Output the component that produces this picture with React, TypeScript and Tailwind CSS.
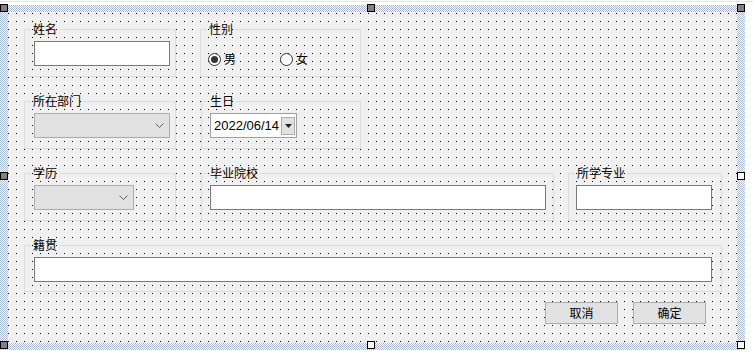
import type { ReactNode } from 'react'

function GroupBox({
  title,
  className,
  children,
}: {
  title: string
  className: string
  children?: ReactNode
}) {
  return (
    <fieldset className={`border border-[#dcdcdc] ${className}`}>
      <legend className="ml-[6px] px-[2px] text-[12px] leading-[16px] text-black">
        {title}
      </legend>
      {children}
    </fieldset>
  )
}

function TextBox({ className }: { className: string }) {
  return <div className={`h-[25px] border border-[#7a7a7a] bg-white ${className}`} />
}

function ComboBox({ className }: { className: string }) {
  return (
    <div
      className={`flex h-[25px] items-center justify-end border border-[#adadad] bg-[#e1e1e1] pr-[5px] ${className}`}
    >
      <svg width="9" height="5" viewBox="0 0 9 5" fill="none">
        <polyline points="0.5,0.5 4.5,4.5 8.5,0.5" stroke="#606060" strokeWidth="1" />
      </svg>
    </div>
  )
}

function Radio({ label, checked }: { label: string; checked?: boolean }) {
  return (
    <div className="flex items-center gap-[3px]">
      <span className="flex h-[13px] w-[13px] items-center justify-center rounded-full border border-[#333] bg-white">
        {checked && <span className="h-[7px] w-[7px] rounded-full bg-[#333]" />}
      </span>
      <span className="text-[12px] leading-[16px]">{label}</span>
    </div>
  )
}

function Button({ label }: { label: string }) {
  return (
    <div className="flex h-[22px] w-[73px] items-center justify-center border border-[#adadad] bg-[#e1e1e1] text-[12px]">
      {label}
    </div>
  )
}

function Handle({ className, white }: { className: string; white?: boolean }) {
  return (
    <div
      className={`absolute h-[8px] w-[8px] border border-black ${white ? 'bg-white' : 'bg-[#808080]'} ${className}`}
    />
  )
}

export default function App() {
  return (
    <div className="relative h-[355px] w-[753px] overflow-hidden bg-white font-['Noto_Sans_CJK_SC',sans-serif] text-black">
      <div className="mt-[1px] h-px w-full bg-[#e3e3e3]" />
      {/* selection frame */}
      <div className="mt-[3px] h-[345px] w-[745px] bg-[repeating-conic-gradient(#a9bbd2_0_25%,#ffffff_0_50%)] bg-[length:2px_2px] pb-[7px] pl-[8px] pr-[8px] pt-[7px]">
        {/* form surface with designer grid */}
        <div className="flex h-full w-full flex-col bg-black bg-[linear-gradient(to_right,transparent_1px,#f0f0f0_1px),linear-gradient(to_bottom,transparent_1px,#f0f0f0_1px)] bg-[length:8px_8px] bg-[position:0_1px] pl-[16px] pt-[9px]">
          <div className="flex gap-[24px]">
            <GroupBox title="姓名" className="h-[56px] w-[152px]">
              <TextBox className="ml-[9px] mt-[4px] w-[136px]" />
            </GroupBox>
            <GroupBox title="性别" className="h-[56px] w-[161px]">
              <div className="ml-[7px] mt-[14px] flex gap-[44px]">
                <Radio label="男" checked />
                <Radio label="女" />
              </div>
            </GroupBox>
          </div>

          <div className="mt-[16px] flex gap-[25px]">
            <GroupBox title="所在部门" className="h-[56px] w-[152px]">
              <ComboBox className="ml-[9px] mt-[4px] w-[136px]" />
            </GroupBox>
            <GroupBox title="生日" className="h-[56px] w-[160px]">
              <div className="ml-[8px] mt-[4px] flex h-[25px] w-[87px] items-center border border-[#a0a0a0] bg-white pl-[3px] pr-[1px]">
                <span className="flex-1 font-['Liberation_Sans',sans-serif] text-[13px] leading-none">
                  2022/06/14
                </span>
                <span className="flex h-[18px] w-[14px] items-center justify-center border border-[#adadad] bg-[#e1e1e1]">
                  <svg width="7" height="4" viewBox="0 0 7 4">
                    <polygon points="0,0 7,0 3.5,4" fill="#222" />
                  </svg>
                </span>
              </div>
            </GroupBox>
          </div>

          <div className="mt-[16px] flex">
            <GroupBox title="学历" className="h-[56px] w-[152px]">
              <ComboBox className="ml-[9px] mt-[4px] w-[100px]" />
            </GroupBox>
            <GroupBox title="毕业院校" className="ml-[25px] h-[56px] w-[353px]">
              <TextBox className="ml-[8px] mt-[4px] w-[336px]" />
            </GroupBox>
            <GroupBox title="所学专业" className="ml-[14px] h-[56px] w-[154px]">
              <TextBox className="ml-[7px] mt-[4px] w-[136px]" />
            </GroupBox>
          </div>

          <GroupBox title="籍贯" className="mt-[16px] h-[55px] w-[698px]">
            <TextBox className="ml-[9px] mt-[4px] w-[678px]" />
          </GroupBox>

          <div className="mt-[10px] flex gap-[15px] pl-[521px]">
            <Button label="取消" />
            <Button label="确定" />
          </div>
        </div>
      </div>

      <Handle className="left-0 top-[4px]" />
      <Handle className="left-[367px] top-[4px]" />
      <Handle className="left-[737px] top-[4px]" />
      <Handle className="left-0 top-[172px]" />
      <Handle className="left-[737px] top-[172px]" white />
      <Handle className="left-0 top-[341px]" />
      <Handle className="left-[367px] top-[341px]" white />
      <Handle className="left-[737px] top-[341px]" white />
    </div>
  )
}
